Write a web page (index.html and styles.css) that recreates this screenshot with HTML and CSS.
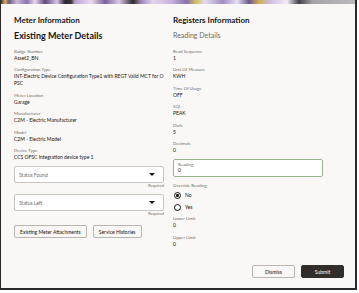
FILE: index.html
```html
<!DOCTYPE html>
<html>
<head>
<meta charset="utf-8">
<link rel="stylesheet" href="styles.css">
</head>
<body>
<div class="dialog">
  <div class="banner"></div>
  <div class="content">
    <div class="col">
      <h2 class="title">Meter Information</h2>
      <h3 class="subtitle">Existing Meter Details</h3>
      <div class="field"><div class="lbl">Badge Number</div><div class="val">Asset2_BN</div></div>
      <div class="field"><div class="lbl">Configuration Type</div><div class="val">INT-Electric Device Configuration Type1 with REGT Valid MCT for O PSC</div></div>
      <div class="field"><div class="lbl">Meter Location</div><div class="val">Garage</div></div>
      <div class="field"><div class="lbl">Manufacturer</div><div class="val">C2M - Electric Manufacturer</div></div>
      <div class="field"><div class="lbl">Model</div><div class="val">C2M - Electric Model</div></div>
      <div class="field"><div class="lbl">Device Type</div><div class="val">CCS OFSC Integration device type 1</div></div>
      <div class="select"><span>Status Found</span><span class="caret"></span></div>
      <div class="req">Required</div>
      <div class="select second"><span>Status Left</span><span class="caret"></span></div>
      <div class="req">Required</div>
      <div class="btnrow">
        <button class="btn">Existing Meter Attachments</button>
        <button class="btn">Service Histories</button>
      </div>
    </div>
    <div class="col">
      <h2 class="title">Registers Information</h2>
      <h3 class="subtitle light">Reading Details</h3>
      <div class="field"><div class="lbl">Read Sequence</div><div class="val">1</div></div>
      <div class="field"><div class="lbl">Unit Of Measure</div><div class="val">KWH</div></div>
      <div class="field"><div class="lbl">Time Of Usage</div><div class="val">OFF</div></div>
      <div class="field"><div class="lbl">SQI</div><div class="val">PEAK</div></div>
      <div class="field"><div class="lbl">Dials</div><div class="val">5</div></div>
      <div class="field"><div class="lbl">Decimals</div><div class="val">0</div></div>
      <div class="input"><div class="lbl">Reading</div><div class="val">0</div></div>
      <div class="lbl override">Override Reading</div>
      <div class="radio"><span class="dot on"></span><span>No</span></div>
      <div class="radio"><span class="dot"></span><span>Yes</span></div>
      <div class="field limits"><div class="lbl">Lower Limit</div><div class="val">0</div></div>
      <div class="field"><div class="lbl">Upper Limit</div><div class="val">0</div></div>
    </div>
  </div>
  <div class="footer">
    <button class="btn fbtn">Dismiss</button>
    <button class="btn fbtn primary">Submit</button>
  </div>
</div>
</body>
</html>
```

FILE: styles.css
```css
* { box-sizing: border-box; margin: 0; padding: 0; }
html, body { background: #ffffff; }
body {
  font-family: "Lato", "Noto Sans", sans-serif;
  color: #161513;
}
.dialog {
  width: 357px;
  height: 290px;
  background: #f9f8f6;
  border-left: 1px solid #2a2a2a;
  border-right: 2px solid #2a2a2a;
  border-bottom: 2px solid #2a2a2a;
  position: relative;
}
.banner {
  height: 4px;
  background: linear-gradient(90deg,
    #3b3340 0px, #d9b24a 4px, #6d5a86 8px, #c9b8de 16px, #8c73ad 26px,
    #e6d9f0 34px, #5e4b78 44px, #d6c4e6 56px, #2b2730 64px, #3a3236 70px,
    #b9a3d2 74px, #e7dcef 90px, #7b6499 104px, #d9c9e8 118px, #2e2a2f 132px,
    #9b87b8 140px, #e2d6ee 152px, #c7b3de 170px, #8a70aa 186px, #d0bb5a 194px,
    #e5dbee 204px, #a48bc2 222px, #e9e0f1 236px, #6c5690 248px, #d3b14a 258px,
    #cbb9e0 268px, #f0ebf4 286px, #45404a 298px, #a8a5a8 312px, #bdb9bc 359px);
}
.content {
  display: grid;
  grid-template-columns: 150px 150px;
  column-gap: 9px;
  padding: 11px 0 0 13px;
}
.col { display: flex; flex-direction: column; }
.title {
  font-size: 8px;
  font-weight: 700;
  line-height: 10px;
  height: 10px;
}
.subtitle {
  font-size: 9px;
  font-weight: 700;
  line-height: 11px;
  margin-top: 5px;
  margin-bottom: 8px;
}
.subtitle.light {
  font-weight: 400;
  font-size: 7px;
  color: #6f6c67;
}
.field { margin-bottom: 5.4px; }
.lbl {
  font-size: 4.4px;
  line-height: 6px;
  color: #6f6c67;
}
.val {
  font-size: 5px;
  line-height: 7px;
  color: #161513;
}
.select {
  height: 17px;
  background: #ffffff;
  border: 1px solid #c9c6c1;
  border-radius: 2px;
  display: flex;
  align-items: center;
  justify-content: space-between;
  padding: 0 8px 0 4px;
  font-size: 5px;
  color: #6f6c67;
}
.select.second { margin-top: 5px; }
.caret {
  width: 0; height: 0;
  border-left: 3px solid transparent;
  border-right: 3px solid transparent;
  border-top: 3px solid #161513;
}
.req {
  text-align: right;
  font-size: 4px;
  line-height: 6px;
  color: #6f6c67;
}
.btnrow {
  display: flex;
  gap: 6px;
  margin-top: 8px;
}
.btn {
  font-family: inherit;
  height: 13px;
  padding: 0 5px;
  font-size: 5px;
  color: #161513;
  background: #f9f8f6;
  border: 1px solid #b9b6b1;
  border-radius: 2px;
}
.input {
  height: 18px;
  background: #ffffff;
  border: 1px solid #97b287;
  border-radius: 2px;
  padding: 1.5px 4px 0;
}
.input .lbl { line-height: 5.5px; }
.input .val { line-height: 6px; }
.override { margin-top: 6px; }
.radio {
  display: flex;
  align-items: center;
  gap: 4px;
  height: 12px;
  font-size: 5px;
  padding-left: 1px;
}
.dot {
  width: 7px; height: 7px;
  border: 1px solid #161513;
  border-radius: 50%;
  background: #ffffff;
  position: relative;
}
.dot.on::after {
  content: "";
  position: absolute;
  left: 1.25px; top: 1.25px;
  width: 2.5px; height: 2.5px;
  border-radius: 50%;
  background: #161513;
}
.limits { margin-top: 3px; }
.footer {
  position: absolute;
  right: 11px;
  top: 265px;
  display: flex;
  gap: 6px;
}
.fbtn { width: 43px; padding: 0; }
.primary {
  background: #312d2a;
  color: #ffffff;
  border-color: #312d2a;
}
```
